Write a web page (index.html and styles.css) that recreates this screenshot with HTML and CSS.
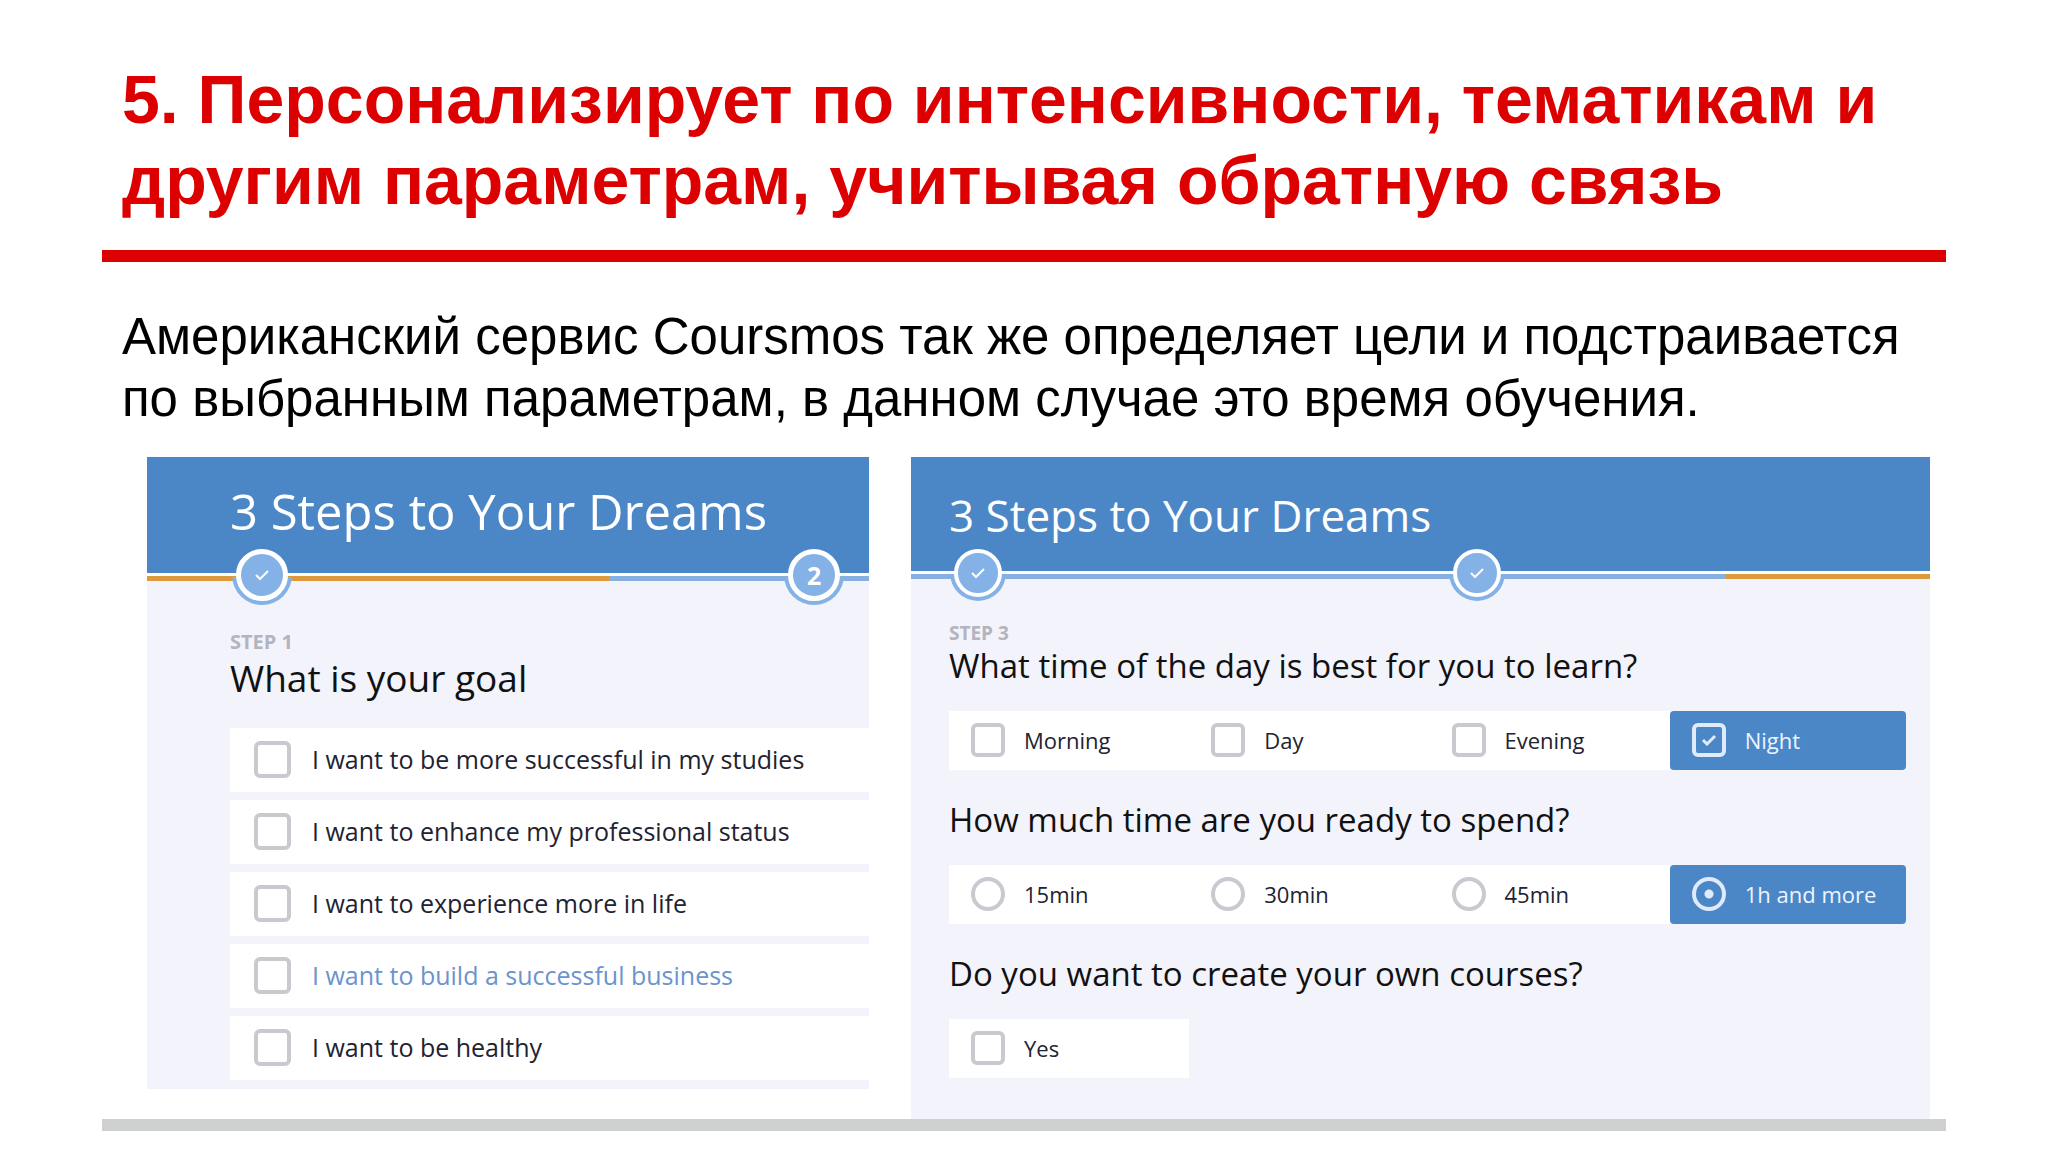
FILE: index.html
```html
<!DOCTYPE html>
<html lang="ru">
<head>
    <meta charset="UTF-8">
    <meta name="viewport" content="width=device-width, initial-scale=1.0">
    <title>Персонализация</title>
    <link rel="stylesheet" href="styles.css">
</head>
<body>
    <main class="slide">
        <header class="slide-header">
            <h1>5. Персонализирует по интенсивности, тематикам и другим параметрам, учитывая обратную связь</h1>
        </header>

        <p class="lead">Американский сервис Coursmos так же определяет цели и подстраивается по выбранным параметрам, в данном случае это время обучения.</p>

        <div class="cards">
            <!-- Step 1 -->
            <form class="card card-goal" lang="en">
                <div class="card-header">
                    <h2>3 Steps to Your Dreams</h2>
                </div>
                <div class="track">
                    <div class="line line-goal"></div>
                    <div class="badge badge-first">
                        <span class="dot"><svg viewBox="0 0 16 12"><path d="M2 6l4 4 8-8"/></svg></span>
                    </div>
                    <div class="badge badge-second"><span class="dot">2</span></div>
                </div>
                <div class="card-body">
                    <p class="step">STEP 1</p>
                    <h3>What is your goal</h3>
                    <div class="goals">
                        <label class="option"><input type="checkbox" name="goal"> I want to be more successful in my studies</label>
                        <label class="option"><input type="checkbox" name="goal"> I want to enhance my professional status</label>
                        <label class="option"><input type="checkbox" name="goal"> I want to experience more in life</label>
                        <label class="option active"><input type="checkbox" name="goal"> I want to build a successful business</label>
                        <label class="option"><input type="checkbox" name="goal"> I want to be healthy</label>
                    </div>
                </div>
            </form>

            <!-- Step 3 -->
            <form class="card card-time" lang="en">
                <div class="card-header">
                    <h2>3 Steps to Your Dreams</h2>
                </div>
                <div class="track">
                    <div class="line line-time"></div>
                    <div class="badge badge-first">
                        <span class="dot"><svg viewBox="0 0 16 12"><path d="M2 6l4 4 8-8"/></svg></span>
                    </div>
                    <div class="badge badge-second">
                        <span class="dot"><svg viewBox="0 0 16 12"><path d="M2 6l4 4 8-8"/></svg></span>
                    </div>
                </div>
                <div class="card-body">
                    <p class="step">STEP 3</p>
                    <h3>What time of the day is best for you to learn?</h3>
                    <div class="choices">
                        <label class="option"><input type="checkbox" name="day"> Morning</label>
                        <label class="option"><input type="checkbox" name="day"> Day</label>
                        <label class="option"><input type="checkbox" name="day"> Evening</label>
                        <label class="option selected">
                            <span class="tick">
                                <input type="checkbox" name="day" checked>
                                <svg viewBox="0 0 16 12"><path d="M2 6l4 4 8-8"/></svg>
                            </span>
                            Night
                        </label>
                    </div>
                    <h3>How much time are you ready to spend?</h3>
                    <div class="choices">
                        <label class="option"><input type="radio" name="spend"> 15min</label>
                        <label class="option"><input type="radio" name="spend"> 30min</label>
                        <label class="option"><input type="radio" name="spend"> 45min</label>
                        <label class="option selected"><input type="radio" name="spend" checked> 1h and more</label>
                    </div>
                    <h3>Do you want to create your own courses?</h3>
                    <div class="choices">
                        <label class="option"><input type="checkbox" name="create"> Yes</label>
                    </div>
                </div>
            </form>
        </div>

        <footer class="slide-footer"></footer>
    </main>
</body>
</html>
```

FILE: styles.css
```css
* {
    box-sizing: border-box;
}

body {
    margin: 0;
    background-color: #fff;
    color: #000;
    font-family: "Liberation Sans", Arial, sans-serif;
}

h1, h2, h3, p {
    margin: 0;
}

/* Slide frame */
.slide {
    padding: 59px 102px 20px;
}

.slide-header {
    padding: 0 20px 29px;
    border-bottom: 12px solid #dc0000;
}

h1 {
    color: #dc0000;
    font-size: 68px;
    line-height: 81px;
}

.lead {
    padding: 44px 20px 27px;
    font-size: 51px;
    line-height: 62px;
}

.slide-footer {
    height: 12px;
    background-color: #cfd1d1;
}

/* Cards */
.cards {
    display: grid;
    grid-template-columns: 722fr 1019fr;
    align-items: start;
    gap: 42px;
    padding: 0 16px 0 45px;
    font-family: "Open Sans", sans-serif;
}

.card {
    background-color: #f3f3fc;
}

.card-header {
    background-color: #4b87c7;
    color: #fff;
}

h2, h3 {
    font-weight: 400;
}

.card-goal .card-header {
    padding: 22px 83px 30px;
}

.card-goal h2 {
    font-size: 49px;
    line-height: 64px;
}

.card-time .card-header {
    padding: 28px 38px 26px;
}

.card-time h2 {
    font-size: 44px;
    line-height: 60px;
}

/* Progress line with the step badges on it */
.track {
    position: relative;
    border-top: 3px solid #fff;
}

.line {
    height: 5px;
}

.line-goal {
    background: linear-gradient(to right, #de9a3a 64%, #86b0e0 64%);
}

.line-time {
    background: linear-gradient(to right, #86b0e0 80%, #de9a3a 80%);
}

.badge {
    position: absolute;
    top: -1px;
    display: flex;
    align-items: center;
    justify-content: center;
    width: 60px;
    height: 60px;
    border-radius: 50%;
    background: linear-gradient(to bottom, transparent 54%, #84b1e6 54%);
    transform: translate(-50%, -50%);
}

.dot {
    display: flex;
    align-items: center;
    justify-content: center;
    width: 52px;
    height: 52px;
    border: 5px solid #fff;
    border-radius: 50%;
    background-color: #84b1e6;
    color: #fff;
    font-size: 25px;
    font-weight: 700;
}

.dot svg {
    width: 16px;
    height: 12px;
}

.card-time .badge {
    width: 56px;
    height: 56px;
}

.card-time .dot {
    width: 48px;
    height: 48px;
    border-width: 4px;
}

.card-goal .badge-first {
    left: 15.9%;
}

.card-goal .badge-second {
    left: 92.4%;
}

.card-time .badge-first {
    left: 6.6%;
}

.card-time .badge-second {
    left: 55.5%;
}

svg {
    fill: none;
    stroke: #fff;
    stroke-width: 2;
}

/* Questions */
.step {
    color: #b3b4be;
    font-weight: 700;
}

h3 {
    color: #111;
}

.card-goal .card-body {
    padding: 48px 0 9px 83px;
}

.card-goal .step {
    font-size: 20px;
    line-height: 26px;
}

.card-goal h3 {
    font-size: 37px;
    line-height: 46px;
    margin-bottom: 27px;
}

.goals {
    display: flex;
    flex-direction: column;
    gap: 8px;
}

.option {
    display: flex;
    align-items: center;
    gap: 21px;
    height: 64px;
    padding: 0 0 2px 24px;
    background-color: #fff;
    color: #222230;
    font-size: 25px;
}

.option.active {
    color: #6b93cd;
}

.card-time .card-body {
    padding: 42px 20px 41px 38px;
}

.card-time .step {
    font-size: 19px;
    line-height: 24px;
}

.card-time h3 {
    font-size: 33px;
    line-height: 42px;
    margin-bottom: 24px;
}

.choices {
    display: grid;
    grid-template-columns: repeat(4, 1fr);
    margin-bottom: 29px;
}

.choices:last-child {
    margin-bottom: 0;
}

.card-time .option {
    height: 59px;
    padding: 0 0 1px 22px;
    gap: 19px;
    font-size: 22px;
}

.card-time .option.selected {
    margin-right: 4px;
    border-radius: 4px;
    background-color: #4b87c7;
    color: #eef4ff;
}

/* Check boxes and radios */
input {
    appearance: none;
    flex: none;
    width: 37px;
    height: 37px;
    margin: 0;
    border: 4px solid #c9c9cf;
    border-radius: 6px;
    background-color: #fff;
}

.card-time input {
    width: 34px;
    height: 34px;
}

input[type="radio"] {
    border-radius: 50%;
}

.selected input {
    border-color: #dfeafa;
    background-color: transparent;
}

.selected input[type="radio"] {
    background: radial-gradient(circle, #dfeafa 4px, transparent 5px);
}

.tick {
    display: grid;
    place-items: center;
}

.tick input, .tick svg {
    grid-area: 1 / 1;
}

.tick svg {
    width: 16px;
    height: 12px;
    stroke: #dfeafa;
    stroke-width: 3;
}
```
